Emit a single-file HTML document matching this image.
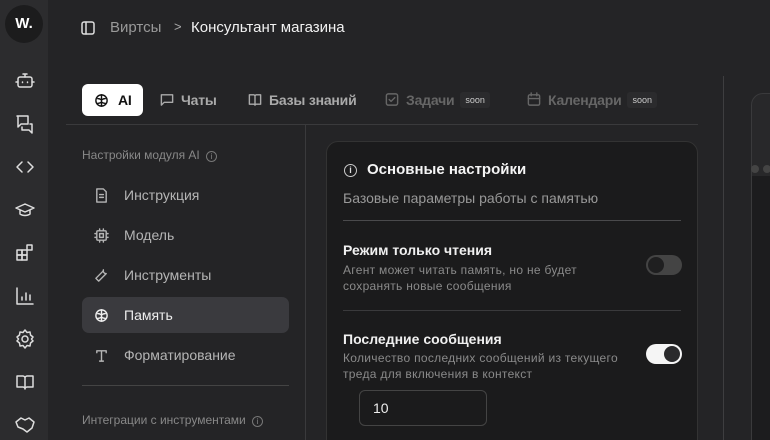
<!DOCTYPE html>
<html style="width:770px;height:440px;overflow:hidden"><head><meta charset="utf-8"><style>
*{box-sizing:border-box;margin:0;padding:0}
html,body{width:770px;height:440px;overflow:hidden}
body{background:#242426;font-family:"Liberation Sans","Noto Sans CJK SC",sans-serif;position:relative;color:#ddd}
.rail{position:absolute;left:0;top:0;width:48px;height:440px;background:#2c2c2e}
.logo{position:absolute;left:5px;top:5px;width:38px;height:38px;border-radius:50%;background:#1c1c1d;color:#fff;font-weight:bold;font-size:15px;text-align:center;line-height:38px}
.ri{position:absolute;left:14px;width:22px;height:22px}
svg{fill:none;stroke:currentColor;stroke-width:1.5;stroke-linecap:round;stroke-linejoin:round}
.abs{position:absolute;white-space:nowrap}
.tab{position:absolute;top:84px;height:32px;font-size:14px;line-height:32px;font-weight:bold;color:#aaa;letter-spacing:-.2px}
.soon{display:inline-block;font-size:9px;background:#2b2b2d;color:#ccc;padding:0 5px;line-height:16px;border-radius:3px;margin-left:6px;vertical-align:2px;font-weight:normal;letter-spacing:0}
.nav{position:absolute;left:82px;width:207px;height:36px;font-size:14px;line-height:36px;color:#b5b5b5;padding-left:42px;border-radius:7px}
.nav svg{position:absolute;left:12px;top:11px;width:15px;height:15px}
.card{position:absolute;left:326px;top:141px;width:372px;height:320px;background:#1b1b1c;border:1px solid #333;border-radius:12px}
.tog{position:absolute;width:36px;height:20px;border-radius:10px}
.clip{position:absolute;left:0;top:0;width:770px;height:440px;overflow:hidden}
</style></head><body><div class="clip">
<div class="rail">
<div class="logo">W.</div>
<svg class="ri" style="top:70px;color:#ddd" viewBox="0 0 22 22"><rect x="4" y="7" width="14" height="10" rx="2"/><path d="M11 7V4M9 4h4M8.5 12v.5M13.5 12v.5M2 12h2M18 12h2"/></svg>
<svg class="ri" style="top:113px;color:#ddd" viewBox="0 0 22 22"><path d="M3 3h11v8H7l-3 3V3zM8 14v3h7l3 3v-9h-2"/></svg>
<svg class="ri" style="top:156px;color:#ddd" viewBox="0 0 22 22"><path d="M8 6l-5 5 5 5M14 6l5 5-5 5"/></svg>
<svg class="ri" style="top:199px;color:#ddd" viewBox="0 0 22 22"><path d="M2 9l9-4 9 4-9 4-9-4zM6 11v4c3 2 7 2 10 0v-4"/></svg>
<svg class="ri" style="top:242px;color:#ddd" viewBox="0 0 22 22"><rect x="3" y="8" width="5" height="5"/><rect x="8" y="8" width="5" height="5"/><rect x="3" y="13" width="5" height="5"/><rect x="8" y="13" width="5" height="5"/><rect x="13" y="3" width="5" height="5"/></svg>
<svg class="ri" style="top:285px;color:#ddd" viewBox="0 0 22 22"><path d="M3 3v16h16M8 15v-3M12 15V8M16 15v-5"/></svg>
<svg class="ri" style="top:328px;color:#ddd" viewBox="0 0 22 22"><circle cx="11" cy="11" r="3"/><path d="M11 2l2 2.5 3-.5.5 3L19 9l-1.5 2L19 13l-2.5 2-.5 3-3-.5L11 20l-2-2.5-3 .5-.5-3L3 13l1.5-2L3 9l2.5-2 .5-3 3 .5z"/></svg>
<svg class="ri" style="top:371px;color:#ddd" viewBox="0 0 22 22"><path d="M3 5h6c1 0 2 1 2 2v11c0-1-1-2-2-2H3zM19 5h-6c-1 0-2 1-2 2v11c0-1 1-2 2-2h6z"/></svg>
<svg class="ri" style="top:414px;color:#ddd" viewBox="0 0 22 22"><path d="M2 8l5-4 4 2 4-2 5 4-2 6-5 4-4-3-5-2z"/></svg>
</div>
<svg class="abs" style="left:80px;top:20px;width:16px;height:16px;color:#ddd" viewBox="0 0 16 16"><rect x="2" y="2" width="12" height="12" rx="2"/><path d="M6 2v12"/></svg>
<div class="abs" style="left:110px;top:19px;font-size:15px;color:#999">Виртсы</div>
<div class="abs" style="left:174px;top:19px;font-size:13px;color:#aaa">&gt;</div>
<div class="abs" style="left:191px;top:19px;font-size:15px;color:#f2f2f2">Консультант магазина</div>

<div class="tab" style="left:82px;width:61px;background:#fff;color:#111;border-radius:6px;padding-left:12px"><svg style="position:absolute;left:12px;top:9px;width:15px;height:15px" viewBox="0 0 16 16"><circle cx="8" cy="8" r="6"/><path d="M8 2v12M4 6c2 0 4 1 4 2M12 6c-2 0-4 1-4 2M4 11c2 0 4-1 4-2M12 11c-2 0-4-1-4-2"/></svg><span style="margin-left:24px">AI</span></div>
<div class="tab" style="left:159px"><svg style="vertical-align:-2px;width:16px;height:15px;margin-right:6px" viewBox="0 0 16 16"><path d="M2 3h12v8H5l-3 3z"/></svg>Чаты</div>
<div class="tab" style="left:247px"><svg style="vertical-align:-2px;width:16px;height:15px;margin-right:6px" viewBox="0 0 16 16"><path d="M2 3h5l1 1 1-1h5v10H9l-1 1-1-1H2zM8 4v10"/></svg>Базы знаний</div>
<div class="tab" style="left:384px;color:#666"><svg style="vertical-align:-2px;width:16px;height:15px;margin-right:6px" viewBox="0 0 16 16"><rect x="2" y="2" width="12" height="12" rx="2"/><path d="M5 8l2 2 4-4"/></svg>Задачи<span class="soon">soon</span></div>
<div class="tab" style="left:526px;color:#666"><svg style="vertical-align:-2px;width:16px;height:15px;margin-right:6px" viewBox="0 0 16 16"><rect x="2" y="3" width="12" height="11" rx="1.5"/><path d="M2 7h12M5 1v3M11 1v3"/></svg>Календари<span class="soon">soon</span></div>
<div class="abs" style="left:66px;top:124px;width:632px;height:1px;background:#3a3a3c"></div>
<div class="abs" style="left:305px;top:125px;width:1px;height:315px;background:#3a3a3c"></div>
<div class="abs" style="left:723px;top:76px;width:1px;height:364px;background:#3e3e40"></div>
<div class="abs" style="left:751px;top:93px;width:30px;height:360px;border:1px solid #3a3a3c;border-radius:12px;background:#28282a"></div>
<div class="abs" style="left:752px;top:176px;width:20px;height:270px;background:#1c1c1e"></div>
<div class="abs" style="left:751px;top:165px;width:8px;height:8px;border-radius:50%;background:#444"></div>
<div class="abs" style="left:763px;top:165px;width:8px;height:8px;border-radius:50%;background:#444"></div>

<div class="abs" style="left:82px;top:148px;font-size:12px;color:#888">Настройки модуля AI <span style="display:inline-block;width:11px;height:11px;border:1px solid #777;border-radius:50%;font-size:8px;text-align:center;line-height:9px;margin-left:3px">i</span></div>
<div class="nav" style="top:177px"><svg viewBox="0 0 16 16"><path d="M3 1h7l3 3v11H3zM6 7h4M6 10h4"/></svg>Инструкция</div>
<div class="nav" style="top:217px"><svg viewBox="0 0 16 16"><rect x="3" y="3" width="10" height="10" rx="1"/><rect x="6" y="6" width="4" height="4"/><path d="M6 1v2M10 1v2M6 13v2M10 13v2M1 6h2M1 10h2M13 6h2M13 10h2"/></svg>Модель</div>
<div class="nav" style="top:257px"><svg viewBox="0 0 16 16"><path d="M10 2a3 3 0 0 0 3 4l-8 8-3-3 8-8a3 3 0 0 1 0-1z"/></svg>Инструменты</div>
<div class="nav" style="top:297px;background:#3a3a3e;color:#eee"><svg viewBox="0 0 16 16"><circle cx="8" cy="8" r="6"/><path d="M8 2v12M4 6c2 0 4 1 4 2M12 6c-2 0-4 1-4 2M4 11c2 0 4-1 4-2M12 11c-2 0-4-1-4-2"/></svg>Память</div>
<div class="nav" style="top:337px"><svg viewBox="0 0 16 16"><path d="M3 3h10M8 3v11M6 14h4M3 3v2M13 3v2"/></svg>Форматирование</div>
<div class="abs" style="left:82px;top:385px;width:207px;height:1px;background:#444"></div>
<div class="abs" style="left:82px;top:413px;font-size:12px;color:#888">Интеграции с инструментами <span style="display:inline-block;width:11px;height:11px;border:1px solid #777;border-radius:50%;font-size:8px;text-align:center;line-height:9px;margin-left:3px">i</span></div>

<div class="card">
<div class="abs" style="left:17px;top:22px;width:13px;height:13px;border:1.3px solid #ccc;border-radius:50%;font-size:9px;text-align:center;line-height:11px;color:#ddd;font-weight:bold">i</div>
<div class="abs" style="left:40px;top:19px;font-size:15px;font-weight:bold;color:#f5f5f5">Основные настройки</div>
<div class="abs" style="left:16px;top:48px;font-size:14px;color:#999">Базовые параметры работы с памятью</div>
<div class="abs" style="left:16px;top:78px;width:338px;height:1px;background:#4a4a4c"></div>
<div class="abs" style="left:16px;top:100px;font-size:14px;font-weight:bold;color:#f0f0f0">Режим только чтения</div>
<div class="abs" style="left:16px;top:120px;font-size:12px;color:#8a8a8a;line-height:16px;letter-spacing:.3px">Агент может читать память, но не будет<br>сохранять новые сообщения</div>
<div class="tog" style="left:319px;top:113px;background:#444"><div style="position:absolute;left:2px;top:2px;width:16px;height:16px;border-radius:50%;background:#1f1f20"></div></div>
<div class="abs" style="left:16px;top:168px;width:338px;height:1px;background:#3a3a3c"></div>
<div class="abs" style="left:16px;top:189px;font-size:14px;font-weight:bold;color:#f0f0f0">Последние сообщения</div>
<div class="abs" style="left:16px;top:208px;font-size:12px;color:#8a8a8a;line-height:16px;letter-spacing:.3px">Количество последних сообщений из текущего<br>треда для включения в контекст</div>
<div class="tog" style="left:319px;top:202px;background:#f5f5f5"><div style="position:absolute;right:2px;top:2px;width:16px;height:16px;border-radius:50%;background:#2a2a2c"></div></div>
<div class="abs" style="left:32px;top:248px;width:128px;height:36px;border:1px solid #444;border-radius:6px;font-size:14px;color:#eee;line-height:34px;padding-left:13px">10</div>
</div>
</div></body></html>
